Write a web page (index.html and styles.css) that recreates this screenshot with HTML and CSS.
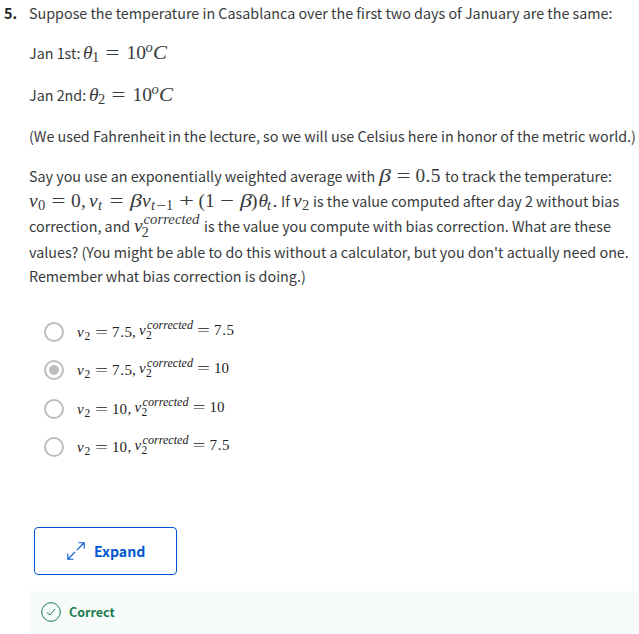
FILE: index.html
```html
<!DOCTYPE html>
<html lang="en">
<head>
<meta charset="utf-8">
<title>Question 5</title>
<link rel="stylesheet" href="styles.css">
</head>
<body>
<main class="question">
  <div class="number">5.</div>
  <div class="content">
    <div class="line l1">Suppose the temperature in Casablanca over the first two days of January are the same:</div>
    <div class="line l2"><span class="seg jan1">Jan 1st:</span><svg class="math" width="90" height="1"><text x="-1" y="1" class="i">θ</text><text x="8" y="4" class="s">1</text><text x="21.500" y="1" textLength="14" lengthAdjust="spacingAndGlyphs">=</text><text x="42.500" y="1">10</text><text x="61.500" y="-6" class="s i">o</text><text x="69" y="1" class="i" textLength="14" lengthAdjust="spacingAndGlyphs">C</text></svg></div>
    <div class="line l3"><span class="seg jan2">Jan 2nd:</span><svg class="math" width="90" height="1"><text x="-1" y="1" class="i">θ</text><text x="8" y="4" class="s">2</text><text x="21.500" y="1" textLength="14" lengthAdjust="spacingAndGlyphs">=</text><text x="42.500" y="1">10</text><text x="61.500" y="-6" class="s i">o</text><text x="69" y="1" class="i" textLength="14" lengthAdjust="spacingAndGlyphs">C</text></svg></div>
    <div class="line l4">(We used Fahrenheit in the lecture, so we will use Celsius here in honor of the metric world.)</div>
    <div class="line l5"><span class="seg say">Say you use an exponentially weighted average with</span><svg class="math" width="66" height="1"><text x="0" y="1" class="i" textLength="12" lengthAdjust="spacingAndGlyphs">β</text><text x="17.500" y="1" textLength="14" lengthAdjust="spacingAndGlyphs">=</text><text x="36.500" y="1" textLength="25" lengthAdjust="spacing">0.5</text></svg><span>to track the temperature:</span></div>
    <div class="line l6"><svg class="math" width="252" height="1"><text x="0" y="1" class="i">v</text><text x="9" y="4" class="s">0</text><text x="22.500" y="1" textLength="14" lengthAdjust="spacingAndGlyphs">=</text><text x="42" y="1">0</text><text x="52" y="1">,</text><text x="60" y="1" class="i">v</text><text x="69" y="4" class="s i">t</text><text x="80.500" y="1" textLength="14" lengthAdjust="spacingAndGlyphs">=</text><text x="101" y="1" class="i" textLength="12" lengthAdjust="spacingAndGlyphs">β</text><text x="113" y="1" class="i">v</text><text x="122" y="4" class="s i">t</text><text x="127" y="4" class="s" textLength="10" lengthAdjust="spacingAndGlyphs">−</text><text x="137" y="4" class="s">1</text><text x="150" y="1" textLength="15" lengthAdjust="spacingAndGlyphs">+</text><text x="169.500" y="1">(</text><text x="176" y="1">1</text><text x="191" y="1" textLength="14" lengthAdjust="spacingAndGlyphs">−</text><text x="211" y="1" class="i" textLength="12" lengthAdjust="spacingAndGlyphs">β</text><text x="222" y="1">)</text><text x="229.500" y="1" class="i">θ</text><text x="238" y="4" class="s i">t</text><text x="243.500" y="1">.</text></svg><span class="seg if">If</span><svg class="math" width="20" height="1"><text x="0" y="1" class="i">v</text><text x="9" y="4" class="s">2</text></svg><span>is the value computed after day 2 without bias</span></div>
    <div class="line l7"><span class="seg corr">correction, and</span><svg class="math" width="70" height="1"><text x="0" y="1" class="i">v</text><text x="7.500" y="6" class="s">2</text><text x="9.500" y="-7" class="s i" textLength="56" lengthAdjust="spacingAndGlyphs">corrected</text></svg><span>is the value you compute with bias correction. What are these</span></div>
    <div class="line l8">values? (You might be able to do this without a calculator, but you don't actually need one.</div>
    <div class="line l9">Remember what bias correction is doing.)</div>

    <div class="options">
      <div class="option"><span class="radio"></span><svg class="formula" width="170" height="24"><text x="0" y="17" class="i">v</text><text x="7.500" y="20" class="s">2</text><text x="18" y="17" textLength="13" lengthAdjust="spacingAndGlyphs">=</text><text x="35" y="17" textLength="20" lengthAdjust="spacing">7.5</text><text x="55" y="17">,</text><text x="62" y="15" class="i">v</text><text x="69" y="19" class="s">2</text><text x="70" y="9" class="s i" textLength="46" lengthAdjust="spacingAndGlyphs">corrected</text><text x="120" y="15" textLength="13" lengthAdjust="spacingAndGlyphs">=</text><text x="137" y="15" textLength="20" lengthAdjust="spacing">7.5</text></svg></div>
      <div class="option"><span class="radio checked"></span><svg class="formula" width="170" height="24"><text x="0" y="17" class="i">v</text><text x="7.500" y="20" class="s">2</text><text x="18" y="17" textLength="13" lengthAdjust="spacingAndGlyphs">=</text><text x="35" y="17" textLength="20" lengthAdjust="spacing">7.5</text><text x="55" y="17">,</text><text x="62" y="15" class="i">v</text><text x="69" y="19" class="s">2</text><text x="70" y="9" class="s i" textLength="46" lengthAdjust="spacingAndGlyphs">corrected</text><text x="120" y="15" textLength="13" lengthAdjust="spacingAndGlyphs">=</text><text x="137" y="15">10</text></svg></div>
      <div class="option"><span class="radio"></span><svg class="formula" width="170" height="24"><text x="0" y="17" class="i">v</text><text x="7.500" y="20" class="s">2</text><text x="18" y="17" textLength="13" lengthAdjust="spacingAndGlyphs">=</text><text x="35" y="17">10</text><text x="50.500" y="17">,</text><text x="57.500" y="15" class="i">v</text><text x="64.500" y="19" class="s">2</text><text x="65.500" y="9" class="s i" textLength="46" lengthAdjust="spacingAndGlyphs">corrected</text><text x="115.500" y="15" textLength="13" lengthAdjust="spacingAndGlyphs">=</text><text x="132.500" y="15">10</text></svg></div>
      <div class="option"><span class="radio"></span><svg class="formula" width="170" height="24"><text x="0" y="17" class="i">v</text><text x="7.500" y="20" class="s">2</text><text x="18" y="17" textLength="13" lengthAdjust="spacingAndGlyphs">=</text><text x="35" y="17">10</text><text x="50.500" y="17">,</text><text x="57.500" y="15" class="i">v</text><text x="64.500" y="19" class="s">2</text><text x="65.500" y="9" class="s i" textLength="46" lengthAdjust="spacingAndGlyphs">corrected</text><text x="115.500" y="15" textLength="13" lengthAdjust="spacingAndGlyphs">=</text><text x="132.500" y="15" textLength="20" lengthAdjust="spacing">7.5</text></svg></div>
    </div>

    <button class="expand"><svg width="18" height="18" viewBox="0 0 18 18" fill="none" stroke="currentColor" stroke-width="1.100"><path d="M9.800 8.200L17 1M11.500 .800H17.200V6.500M8.200 9.800L1 17M.800 11.500V17.200H6.500"/></svg><span>Expand</span></button>
    <div class="feedback"><svg width="20" height="20" viewBox="0 0 20 20" fill="none" stroke="currentColor"><circle cx="10" cy="10" r="9.300"/><path d="M6 10.500L9 13L14 7"/></svg><span>Correct</span></div>
  </div>
</main>
</body>
</html>
```
FILE: styles.css
```css
* { box-sizing: border-box; }
body {
  margin: 0;
  background: #fff;
  color: #373a3c;
  font: 14.32px/20px "Noto Sans CJK SC", "Open Sans", sans-serif;
  overflow: hidden;
}
.question { display: flex; height: 634px; padding-top: 3px; }
.number { flex: none; width: 29px; padding-left: 4px; font-weight: 700; color: #1f1f1f; }
.content { flex: 1; min-width: 0; }
.line { height: 20px; white-space: nowrap; }
.l2 { margin-top: 20px; }
.l3 { margin-top: 22px; }
.l4 { margin-top: 21px; }
.l5 { margin-top: 20px; }
.l6, .l7 { margin-top: 5px; }
.l8 { margin-top: 6px; }
.l9 { margin-top: 4px; }
.seg { display: inline-block; }
.jan1 { width: 55px; }
.jan2 { width: 60.5px; }
.say { width: 350px; }
.if { width: 12px; }
.corr { width: 105px; }
.math, .formula {
  overflow: visible;
  fill: #373a3c;
  font-family: "Liberation Serif", serif;
}
.math { font-size: 19.4px; }
.math .s { font-size: 14.5px; }
.formula { font-size: 15px; fill: #222; }
.formula .s { font-size: 11.5px; }
.i { font-style: italic; }
.options { margin-top: 36px; padding-left: 15px; }
.option { display: flex; align-items: center; height: 38.3px; margin-top: -9px; margin-bottom: 9px; }
.formula { margin-left: 12.5px; }
.radio {
  display: flex;
  align-items: center;
  justify-content: center;
  width: 20px;
  height: 20px;
  border: 2px solid #bdbdbd;
  border-radius: 50%;
}
.checked::after { content: ""; width: 10px; height: 10px; border-radius: 50%; background: #bdbdbd; }
.expand {
  display: flex;
  align-items: center;
  width: 143px;
  height: 48px;
  margin: 60.8px 0 0 5px;
  padding: 0 0 0 32px;
  gap: 9px;
  border: 1px solid #0056d2;
  border-radius: 4px;
  background: #fff;
  color: #0056d2;
  font: 700 14.1px/20px "Noto Sans CJK SC", "Open Sans", sans-serif;
}
.feedback {
  display: flex;
  align-items: center;
  gap: 8px;
  height: 43px;
  margin-top: 16px;
  padding-left: 12px;
  background: #f7fbf9;
  color: #1d7c50;
  font-size: 12.5px;
  font-weight: 700;
}
```
